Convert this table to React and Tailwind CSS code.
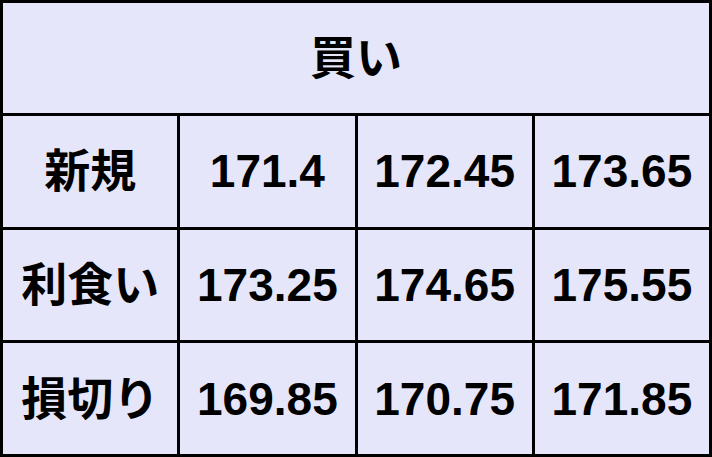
const rows = [
  ['新規', '171.4', '172.45', '173.65'],
  ['利食い', '173.25', '174.65', '175.55'],
  ['損切り', '169.85', '170.75', '171.85'],
];

export default function App() {
  return (
    <div className="w-[712px] h-[457px] bg-white">
      <div
        className="w-[712px] h-[457px] bg-black p-[3px] grid grid-cols-4 grid-rows-[110px_repeat(3,1fr)] gap-[3px] text-black font-bold text-[46px] leading-none"
        style={{ fontFamily: '"Liberation Sans", "Noto Sans CJK JP", sans-serif' }}
      >
        <div className="col-span-4 bg-[#e6e6fa] flex items-center justify-center">買い</div>
        {rows.map((r) =>
          r.map((c, i) => (
            <div key={r[0] + i} className="bg-[#e6e6fa] flex items-center justify-center">
              {c}
            </div>
          ))
        )}
      </div>
    </div>
  );
}
